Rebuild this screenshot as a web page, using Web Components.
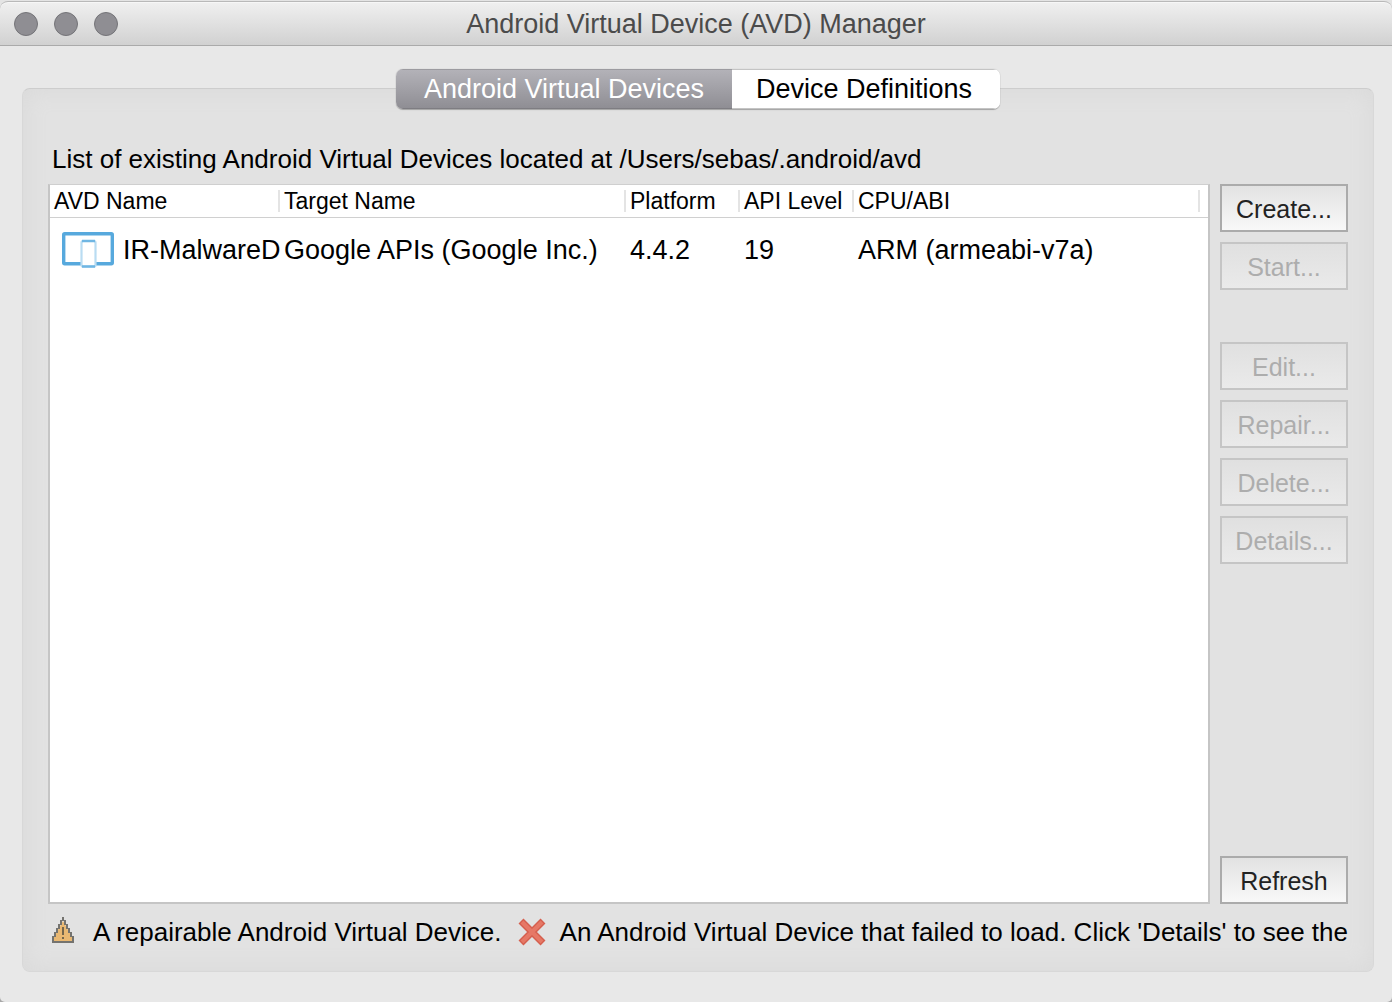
<!DOCTYPE html>
<html lang="en">
<head>
<meta charset="utf-8">
<title>Android Virtual Device (AVD) Manager</title>
<style>
html { background: linear-gradient(#e4e4e4 50%, #a8a8a8 50%); }
body { margin: 0; font-family: "Liberation Sans", Arial, sans-serif; font-size: 27px; color: #000; }
</style>
</head>
<body>
<avd-window heading="Android Virtual Device (AVD) Manager">
  <avd-tabs slot="tabs">
    <avd-tab selected>Android Virtual Devices</avd-tab>
    <avd-tab>Device Definitions</avd-tab>
  </avd-tabs>
  <avd-panel>
    <span slot="caption">List of existing Android Virtual Devices located at /Users/sebas/.android/avd</span>
    <avd-table slot="list"></avd-table>
    <avd-actions slot="actions">
      <avd-button>Create...</avd-button>
      <avd-button disabled>Start...</avd-button>
      <avd-button slot="edit" disabled>Edit...</avd-button>
      <avd-button slot="edit" disabled>Repair...</avd-button>
      <avd-button slot="edit" disabled>Delete...</avd-button>
      <avd-button slot="edit" disabled>Details...</avd-button>
      <avd-button slot="end">Refresh</avd-button>
    </avd-actions>
    <avd-legend slot="legend"></avd-legend>
  </avd-panel>
</avd-window>
<script>
function define(name, html, setup) {
  const template = document.createElement('template');
  template.innerHTML = html;
  customElements.define(name, class extends HTMLElement {
    constructor() {
      super();
      this.attachShadow({ mode: 'open' }).append(template.content.cloneNode(true));
    }
    connectedCallback() { if (setup) setup(this, this.shadowRoot); }
  });
}

define('avd-window', `
<style>
:host { display: flex; flex-direction: column; box-sizing: border-box; min-height: 100vh; padding-top: 1px; }
header { display: grid; grid-template-columns: 1fr auto 1fr; align-items: center; box-sizing: border-box; height: 45px; padding: 0 14px;
  border-top: 1px solid #b9b9b9; border-bottom: 1px solid #aaa; border-radius: 8px 8px 0 0;
  background: linear-gradient(#f0f0f0, #d1d1d1); box-shadow: inset 0 1px #f7f7f7; }
.lights { display: flex; gap: 16px; }
.lights button { width: 24px; height: 24px; padding: 0; border: 1px solid #747478; border-radius: 50%; background: #8f8e93; }
h1 { margin: 0; font-size: 27px; line-height: 30px; font-weight: 400; color: #4b4b4b; }
main { flex: 1; display: flex; flex-direction: column; padding: 23px 18px 30px 22px; background: #e8e8e8; border-radius: 0 0 5px 5px; }
</style>
<header>
  <div class="lights"><button aria-label="Close"></button><button aria-label="Minimize"></button><button aria-label="Zoom"></button></div>
  <h1></h1>
</header>
<main><slot name="tabs"></slot><slot></slot></main>`,
(host, root) => { root.querySelector('h1').textContent = host.getAttribute('heading'); });

define('avd-tabs', `
<style>
:host { display: flex; justify-content: center; position: relative; z-index: 1; margin-bottom: -21px; }
div { display: flex; border-radius: 7px; box-shadow: 0 0 1px #a8a8a8, 0 1px 1px #a2a2a2; background: #fff; overflow: hidden; }
</style><div role="tablist"><slot></slot></div>`);

define('avd-tab', `
<style>
:host { display: flex; }
button { height: 40px; padding: 0 28px 0 24px; border: 1px solid #c4c4c4; border-width: 1px 0; background: #fff; font: inherit; line-height: 38px; color: #000; }
:host([selected]) button { padding: 0 28px; border-color: #9c9ba0 #9c9ba0 #7e7d82; background: linear-gradient(#b3b2b8, #8f8e94); color: #fff; }
</style><button role="tab"><slot></slot></button>`,
(host, root) => root.querySelector('button').setAttribute('aria-selected', host.hasAttribute('selected')));

define('avd-panel', `
<style>
:host { flex: 1; display: grid; grid-template: auto 1fr auto / minmax(0, 1fr) 128px; column-gap: 10px; padding: 55px 25px 24px 25px;
  border: 1px solid #d8d8d8; border-top-color: #cdcdcd; border-radius: 8px; background: #e2e2e2; box-shadow: inset 0 0 20px 4px #dbdbdb; box-sizing: border-box; }
.caption { grid-column: 1 / -1; padding: 0 4px 10px; line-height: 30px; font-size: 26px; }
.legend { grid-column: 1 / -1; min-width: 0; }
slot[name=list], slot[name=actions] { display: grid; }
</style>
<div class="caption"><slot name="caption"></slot></div>
<slot name="list"></slot><slot name="actions"></slot>
<div class="legend"><slot name="legend"></slot></div>`);

define('avd-table', `
<style>
:host { display: block; border: 2px solid #c5c5c5; border-top: 1px solid #cfcfcf; background: #fff; overflow: hidden; }
table { width: 100%; table-layout: fixed; border-collapse: separate; border-spacing: 0; }
th, td { padding: 0; text-align: left; font-weight: 400; white-space: nowrap; }
th { height: 32px; font-size: 23px; border-bottom: 1px solid #d0d0d0; }
th div { height: 22px; line-height: 22px; padding-left: 4px; border-right: 2px solid #e4e4e4; }
td { height: 64px; padding-left: 4px; font-size: 27px; }
.name { display: flex; align-items: center; gap: 9px; padding-left: 8px; }
svg { flex: none; }
.wide { width: 346px; } .narrow { width: 114px; }
</style>
<table>
<colgroup><col style="width:230px"><col class="wide"><col class="narrow"><col class="narrow"><col class="wide"><col></colgroup>
<thead><tr><th><div>AVD Name</div></th><th><div>Target Name</div></th><th><div>Platform</div></th><th><div>API Level</div></th><th><div>CPU/ABI</div></th><th></th></tr></thead>
<tbody><tr>
<td><div class="name"><svg width="52" height="40" viewBox="0 0 52 40" aria-hidden="true">
<rect x="1.700" y="3.700" width="48.600" height="30" rx="1" fill="#fff" stroke="#57a9dd" stroke-width="3.400"/>
<rect x="19.500" y="11" width="14" height="25.500" rx="1.500" fill="#fff" stroke="#b9dcf2" stroke-width="2.200"/>
<path d="M20 11h13M20 36.500h13" stroke="#6fb6e3" stroke-width="2.600"/></svg><span>IR-MalwareD</span></div></td>
<td>Google APIs (Google Inc.)</td><td>4.4.2</td><td>19</td><td>ARM (armeabi-v7a)</td><td></td>
</tr></tbody>
</table>`);

define('avd-actions', `
<style>
:host { display: flex; flex-direction: column; justify-content: space-between; }
div { display: flex; flex-direction: column; gap: 10px; }
.edit { margin-top: 42px; }
</style>
<div><slot></slot><div class="edit"><slot name="edit"></slot></div></div>
<slot name="end"></slot>`);

define('avd-button', `
<style>
:host { display: grid; }
button { height: 48px; padding: 2px 0 0; border: 2px solid #ababab; background: linear-gradient(#e2e2e2, #f8f8f8); font: inherit; font-size: 25px; color: #222; }
button:disabled { border-color: #c5c5c5; background: linear-gradient(#e0e0e0, #eaeaea); color: #adadad; }
</style><button><slot></slot></button>`,
(host, root) => { root.querySelector('button').disabled = host.hasAttribute('disabled'); });

define('avd-legend', `
<style>
:host { display: flex; align-items: center; height: 30px; padding-top: 13px; overflow: hidden; white-space: nowrap; font-size: 26px; line-height: 30px; }
svg { flex: none; }
.warning { margin: 0 18px 0 3px; } .error { margin: 0 13px 0 15px; }
</style>
<svg class="warning" width="24" height="30" viewBox="0 0 24 30" aria-hidden="true">
<path d="M12 4L21 20V24H3V20Z" fill="#e9b872"/>
<path d="M12 -1V4M10 3V8M14 3V8M8 7V12M16 7V12M6 11V16M18 11V16M4 15V20M20 15V20M2 19V26M22 19V26M1 25H23" fill="none" stroke="#74736f" stroke-width="2"/>
<path d="M12 10v8M12 20v2" stroke="#74664c" stroke-width="2"/></svg>
<span>A repairable Android Virtual Device.</span>
<svg class="error" width="30" height="30" viewBox="0 0 30 30" aria-hidden="true">
<path d="M4 4L26 26M26 4L4 26" stroke="#d55f4e" stroke-width="7"/>
<path d="M5 5L25 25M25 5L5 25" stroke="#e67866" stroke-width="4"/></svg>
<span>An Android Virtual Device that failed to load. Click 'Details' to see the</span>`);
</script>
</body>
</html>
